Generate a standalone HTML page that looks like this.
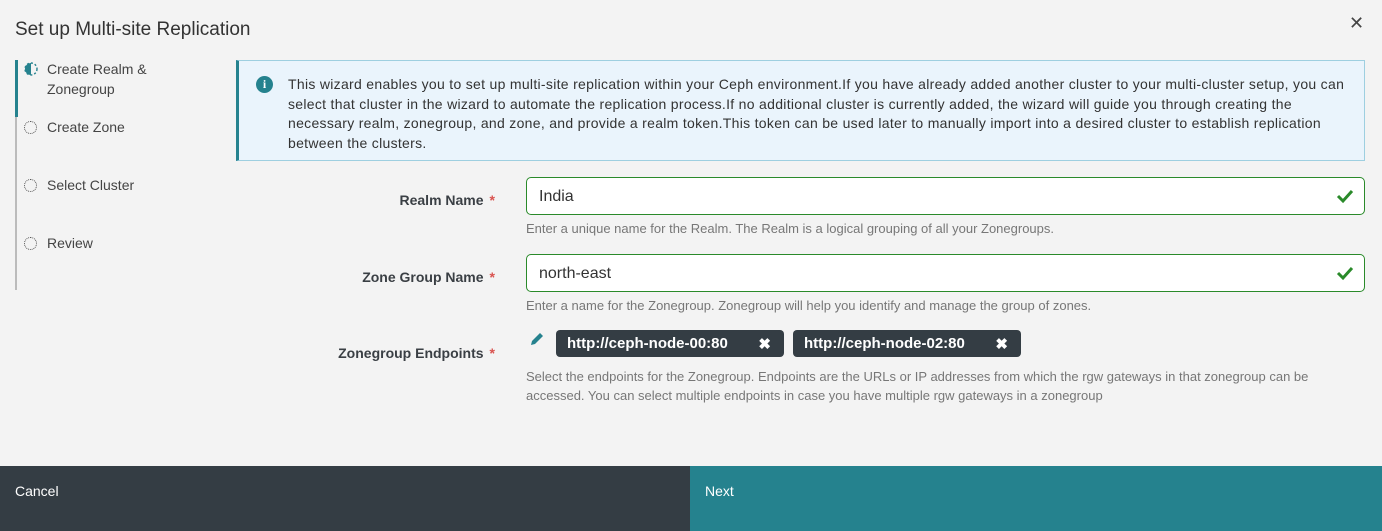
<!DOCTYPE html>
<html><head><meta charset="utf-8"><style>
*{box-sizing:border-box;margin:0;padding:0}
body{width:1382px;height:531px;background:#f3f3f3;font-family:"Liberation Sans",sans-serif;color:#333;position:relative;overflow:hidden}
.a{position:absolute;white-space:nowrap}
.title{left:15px;top:19px;font-size:19px;color:#333}
.close{left:1349px;top:13px;font-size:18px;color:#444}
.rail{left:15px;top:60px;width:2px;height:230px;background:#bbb}
.rail2{left:15px;top:60px;width:3px;height:57px;background:#25828e}
.step{font-size:14px;color:#444;left:47px}
.circ{left:24px;width:13px;height:13px;border:1.5px dotted #555;border-radius:50%}
.info{left:236px;top:60px;width:1129px;height:101px;background:#eaf4fc;border:1px solid #9ecfe0;border-left:3px solid #25828e}
.info p{position:absolute;left:49px;top:14px;width:1060px;font-size:14px;letter-spacing:0.3px;line-height:19.5px;color:#333;white-space:normal}
.ii{position:absolute;left:17px;top:15px;width:17px;height:17px;border-radius:50%;background:#25828e;color:#fff;font-size:12px;font-weight:bold;text-align:center;line-height:17px;font-family:"Liberation Serif",serif}
.lbl{font-size:14px;font-weight:bold;color:#3a3f44;text-align:right;right:887px}
.lbl b{color:#d9534f;margin-left:6px}
.inp{left:526px;width:839px;height:38px;border:1px solid #2a8a2a;border-radius:5px;background:#fff;font-size:16px;color:#333;padding:10px 0 0 12px}
.chk{position:absolute;right:9px;top:8px}
.help{left:526px;font-size:13px;color:#777;line-height:19px;white-space:normal;width:800px}
.tag{top:330px;height:27px;background:#343d44;color:#fff;border-radius:4px;font-size:15px;font-weight:bold;padding:5px 0 0 11px}
.foot{top:466px;height:65px;font-size:14px;color:#fff;padding:17px 0 0 15px}
</style></head><body>
<div class="a title">Set up Multi-site Replication</div>
<div class="a close">✕</div>
<div class="a rail"></div><div class="a rail2"></div>
<svg class="a" style="left:24px;top:62px" width="14" height="14" viewBox="0 0 14 14"><path d="M7 1A6 6 0 0 0 7 13Z" fill="#25828e"/><circle cx="7" cy="7" r="6" fill="none" stroke="#25828e" stroke-width="1.4" stroke-dasharray="2 2"/></svg>
<div class="a step" style="top:59px;line-height:20px">Create Realm &amp;<br>Zonegroup</div>
<div class="a circ" style="top:121px"></div><div class="a step" style="top:119px">Create Zone</div>
<div class="a circ" style="top:179px"></div><div class="a step" style="top:177px">Select Cluster</div>
<div class="a circ" style="top:237px"></div><div class="a step" style="top:235px">Review</div>
<div class="a info"><div class="ii">i</div><p>This wizard enables you to set up multi-site replication within your Ceph environment.If you have already added another cluster to your multi-cluster setup, you can select that cluster in the wizard to automate the replication process.If no additional cluster is currently added, the wizard will guide you through creating the necessary realm, zonegroup, and zone, and provide a realm token.This token can be used later to manually import into a desired cluster to establish replication between the clusters.</p></div>
<div class="a lbl" style="top:192px">Realm Name<b>*</b></div>
<div class="a inp" style="top:177px">India<svg class="chk" width="20" height="20" viewBox="0 0 20 20"><path d="M3 10l5 5 9-10" fill="none" stroke="#2a8a2a" stroke-width="3"/></svg></div>
<div class="a help" style="top:219px">Enter a unique name for the Realm. The Realm is a logical grouping of all your Zonegroups.</div>
<div class="a lbl" style="top:269px">Zone Group Name<b>*</b></div>
<div class="a inp" style="top:254px">north-east<svg class="chk" width="20" height="20" viewBox="0 0 20 20"><path d="M3 10l5 5 9-10" fill="none" stroke="#2a8a2a" stroke-width="3"/></svg></div>
<div class="a help" style="top:296px">Enter a name for the Zonegroup. Zonegroup will help you identify and manage the group of zones.</div>
<div class="a lbl" style="top:345px">Zonegroup Endpoints<b>*</b></div>
<svg class="a" style="left:529px;top:331px" width="16" height="16" viewBox="0 0 16 16"><path d="M2 14l1-4 8-8 3 3-8 8z" fill="#25828e"/></svg>
<div class="a tag" style="left:556px;width:228px">http://ceph-node-00:80 <span style="position:absolute;right:13px">✖</span></div>
<div class="a tag" style="left:793px;width:228px">http://ceph-node-02:80 <span style="position:absolute;right:13px">✖</span></div>
<div class="a help" style="top:367px">Select the endpoints for the Zonegroup. Endpoints are the URLs or IP addresses from which the rgw gateways in that zonegroup can be accessed. You can select multiple endpoints in case you have multiple rgw gateways in a zonegroup</div>
<div class="a foot" style="left:0;width:690px;background:#343d44">Cancel</div>
<div class="a foot" style="left:690px;width:692px;background:#25828e">Next</div>
</body></html>
